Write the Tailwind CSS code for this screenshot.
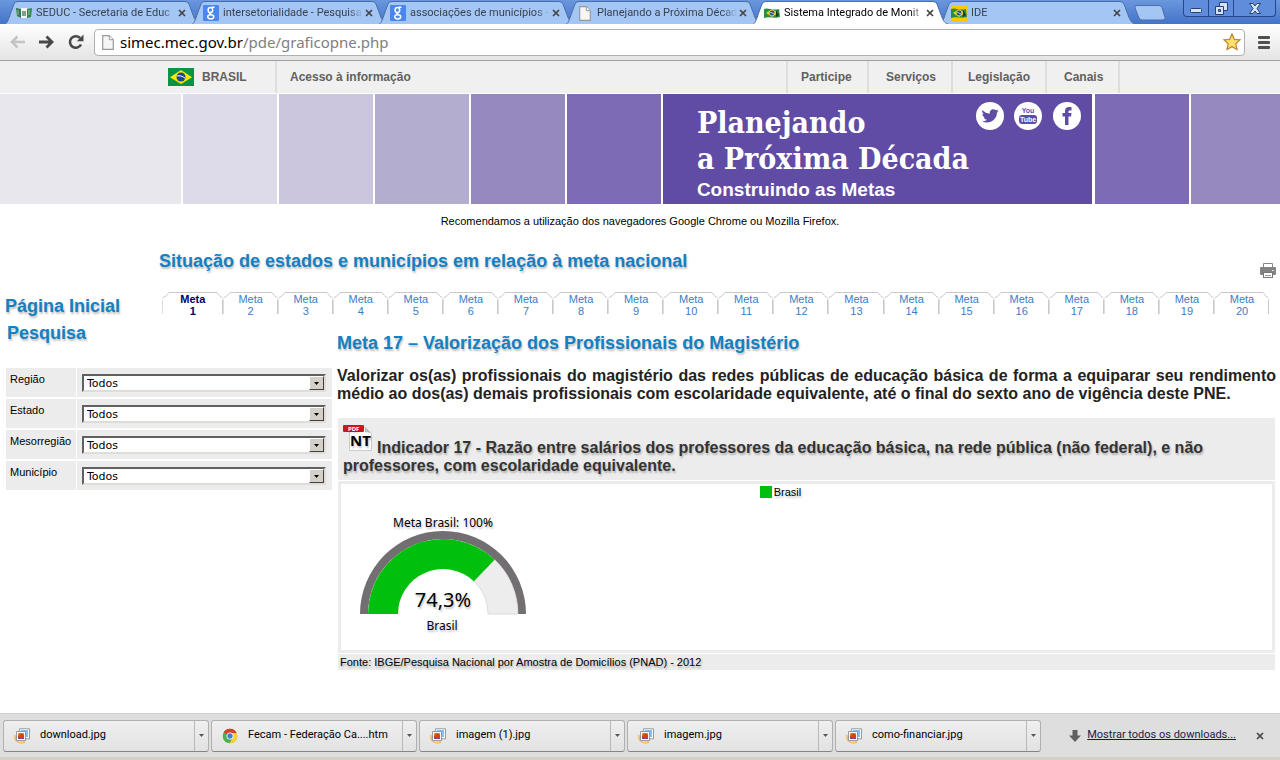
<!DOCTYPE html>
<html lang="pt-BR">
<head>
<meta charset="utf-8">
<meta name="viewport" content="width=device-width, initial-scale=1">
<title>Sistema Integrado de Monitoramento</title>
<script src="https://cdn.jsdelivr.net/npm/@tailwindcss/browser@4"></script>
</head>
<body class="min-h-screen flex flex-col bg-white text-black font-['Liberation_Sans',Arial,sans-serif] text-[11px] overflow-x-hidden">

<svg class="hidden">
  <symbol id="close" viewBox="0 0 8 8"><path d="M1 1l6 6M7 1L1 7" stroke="#444" stroke-width="1.7" fill="none"/></symbol>
  <symbol id="page" viewBox="0 0 12 15"><path d="M.7.7h6.6l4 4v9.6H.7z" fill="#f6f6f6" stroke="#999" stroke-width="1.2"/><path d="M7.3.7v4h4" fill="#fff" stroke="#999"/></symbol>
  <symbol id="google" viewBox="0 0 16 16"><rect width="16" height="16" rx="1" fill="#4a86ee"/><g fill="none" stroke="#fff" stroke-width="1.5"><ellipse cx="7.400" cy="5" rx="2.300" ry="2.600"/><path d="M8.500 2.300h3M8.300 7.500c-2 .4-2 1.500 0 2.100"/><ellipse cx="7.700" cy="11.800" rx="3" ry="2.100"/></g></symbol>
  <symbol id="seduc" viewBox="0 0 16 12"><path d="M0 1l5 1v9l-4-2z" fill="#2f7a48"/><path d="M5 1h6v10H5z" fill="#f2f5f2"/><path d="M11 2l5-1-1 9-4 1z" fill="#2f8a4a"/><path d="M6 4h4v5H6z" fill="#7f9f8b"/><path d="M2 3v5M13 3v5" stroke="#8cc79d"/></symbol>
  <symbol id="flagwave" viewBox="0 0 16 12"><path d="M0 2c4-2 8 2 15 0l1 8c-5 2-10-1-16 1z" fill="#2c8a45"/><path d="M2 6l6-4 6 4-6 4z" fill="#e3d227"/><circle cx="8" cy="6" r="2.400" fill="#264f8a"/><path d="M6 5l4 2" stroke="#fff" stroke-width=".7"/><path d="M12 3l3 5-3 2z" fill="#163d22"/></symbol>
  <symbol id="photo" viewBox="0 0 16 16"><path d="M1 7c-1 6 4 9 10 7" fill="none" stroke="#f6c166" stroke-width="2"/><path d="M5.500.8h10v10h-10z" fill="#fff" stroke="#999"/><path d="M7 2h7v7H7z" fill="#84bff2"/><path d="M2.500 3.500h9v9h-9z" fill="#fff" stroke="#999"/><path d="M4 5h6v6H4z" fill="#f08a2a"/><path d="M4 11V8l3-3 3 2v4z" fill="#d9430d"/><path d="M4 10h6v1H4z" fill="#7b3c9b"/></symbol>
  <symbol id="chrome" viewBox="0 0 16 16"><circle cx="8" cy="8" r="7.300" fill="#4bae4f"/><path d="M8 8L1.700 4.300A7.300 7.300 0 0 1 14.600 5z" fill="#dc3b2d"/><path d="M8 5h6.700A7.300 7.300 0 0 1 7.600 15.300L10.700 9.500z" fill="#fbcf36"/><circle cx="8" cy="8" r="3.500" fill="#fff"/><circle cx="8" cy="8" r="2.700" fill="#3f7fd6"/></symbol>
</svg>

<!-- Browser tabs -->
<header class="shrink-0">
  <div class="h-6 flex justify-between bg-linear-to-b from-[#6a97dd] to-[#4474c9] font-[Roboto,Tahoma,sans-serif]">
    <nav id="browser-tabs" class="flex pl-[10px] min-w-0" aria-label="Abas"></nav>
    <div class="flex h-[17px] mr-[4px] border border-t-0 border-[#27468c] rounded-b bg-[#5f8ddb] shrink-0">
      <button aria-label="Minimizar" class="w-[25px] flex justify-center items-end pb-[3px] border-r border-[#27468c]"><svg width="12" height="5"><rect x=".5" y=".5" width="11" height="4" rx="1" fill="#d5e2f8" stroke="#27407a"/></svg></button>
      <button aria-label="Restaurar" class="w-[25px] grid place-items-center border-r border-[#27468c]"><svg width="13" height="13" fill="#d5e2f8" stroke="#27407a"><path d="M4.500.5h8v8h-8z"/><path d="M.5 4.500h8v8h-8z"/><path d="M3.500 7.500h2v2h-2z" fill="#5f8ddb"/></svg></button>
      <button aria-label="Fechar" class="w-[41px] grid place-items-center"><svg width="12" height="11"><path d="M.5.5h3.500l2 2.500 2-2.500h3.500L8 5.500l3.500 5H8L6 8l-2 2.500H.5l3.500-5z" fill="#d5e2f8" stroke="#27407a"/></svg></button>
    </div>
  </div>
  <!-- Toolbar -->
  <div class="h-[37px] flex items-center border-b border-[#a0a0a0] bg-linear-to-b from-white to-[#e4e4e4] pl-[10px] pr-[10px]">
    <button aria-label="Voltar" class="w-[29px]"><svg width="15" height="14" fill="none" stroke="#c4c4c4" stroke-width="2.500"><path d="M15 7H2M7.500 1.500L2 7l5.500 5.500"/></svg></button>
    <button aria-label="Avançar" class="w-[29px]"><svg width="15" height="14" fill="none" stroke="#484848" stroke-width="2.800"><path d="M0 7h13M7.500 1.500L13 7l-5.500 5.500"/></svg></button>
    <button aria-label="Recarregar" class="w-[26px]"><svg width="16" height="16" fill="none" stroke="#484848" stroke-width="2.600"><path d="M13 10.500A5.800 5.800 0 1 1 12 4"/><path d="M15.500.5v6.700H8.800z" fill="#484848" stroke="none"/></svg></button>
    <div class="flex-1 h-[27px] flex items-center border border-[#b0b0b0] rounded-sm bg-white px-[7px]">
      <svg width="12" height="15"><use href="#page"/></svg>
      <button class="flex-1 ml-[6px] text-left text-[15px] leading-5 font-['Noto_Sans',Tahoma,sans-serif] text-[#808080]" aria-label="Endereço"><span class="text-black">simec.mec.gov.br</span>/pde/graficopne.php</button>
      <button aria-label="Favorito" class="-mr-1"><svg width="18" height="18"><path d="M9 1l2.300 5.300 5.700.6-4.200 3.900 1.200 5.700L9 13.600l-5 2.900 1.200-5.700L1 6.900l5.700-.6z" fill="#ffe26b" stroke="#c08a35" stroke-width="1.300"/></svg></button>
    </div>
    <button aria-label="Menu" class="ml-[13px]"><svg width="12" height="13" fill="#505050"><rect width="12" height="3" rx="1"/><rect y="5" width="12" height="3" rx="1"/><rect y="10" width="12" height="3" rx="1"/></svg></button>
  </div>
</header>

<!-- Government bar -->
<div class="bg-[#f0f0f0] border-b border-white text-[12px] font-bold text-[#606060]">
  <div class="max-w-[960px] mx-auto h-8 flex items-center">
    <a href="#" class="flex items-center h-full w-[117px] pl-2 gap-2 border-r-2 border-[#dedede]">
      <svg width="26" height="18"><rect width="26" height="18" fill="#079447"/><path d="M2 9.300L13 2l11 7.300L13 16z" fill="#fde900"/><circle cx="13" cy="9" r="4.500" fill="#1f4590"/><path d="M8.800 8c3-.7 6 .2 8.200 2.200" stroke="#fff" fill="none"/></svg>
      BRASIL
    </a>
    <a href="#" class="flex-1 pl-[13px]">Acesso à informação</a>
    <nav class="flex h-full">
      <a href="#" class="flex items-center border-l-2 border-[#dedede] w-[81px] pl-[13px]">Participe</a>
      <a href="#" class="flex items-center border-l-2 border-[#dedede] w-[84px] pl-[17px]">Serviços</a>
      <a href="#" class="flex items-center border-l-2 border-[#dedede] w-[94px] pl-[15px]">Legislação</a>
      <a href="#" class="flex items-center border-x-2 border-[#dedede] w-[75px] pl-[17px]">Canais</a>
    </nav>
  </div>
</div>

<!-- Banner -->
<div class="h-[110px] flex gap-[2px]">
  <div class="grow-[2.03] basis-0 bg-[#e8e7ee]"></div>
  <div class="w-[94px] bg-[#dddae9]"></div>
  <div class="w-[94px] bg-[#cbc6de]"></div>
  <div class="w-[94px] bg-[#b3aecf]"></div>
  <div class="w-[94px] bg-[#9689c0]"></div>
  <div class="w-[94px] bg-[#7d6bb5]"></div>
  <div class="w-[429px] bg-[#604ca5] flex justify-between pl-[34px] pr-[11px] text-white">
    <h1 class="pt-[11px] font-bold">
      <span class="block font-['DejaVu_Serif_Condensed','DejaVu_Serif',serif] text-[30px] leading-9 whitespace-nowrap">Planejando<br>a Próxima Década</span>
      <span class="block text-[19px] leading-[26px]">Construindo as Metas</span>
    </h1>
    <div class="flex gap-[10px] pt-2 shrink-0">
      <a href="#" aria-label="Twitter"><svg width="28" height="28"><circle cx="14" cy="14" r="14" fill="#fff"/><path d="M6.500 8c2 2.300 4.500 3.500 7.300 3.700-.6-4 3.700-5.600 6-3.400.9-.2 1.600-.5 2.300-.9-.2.900-.7 1.500-1.400 2 .7-.1 1.300-.3 1.900-.5-.4.700-1 1.300-1.700 1.800.3 6.500-7.300 12.300-15 8.500 2 .1 3.700-.4 5.100-1.500-1.600-.1-2.700-1-3.200-2.400h1.300c-1.700-.5-2.700-1.800-2.800-3.400l1.500.4C6.300 11.200 6 9.500 6.500 8z" fill="#604ca5"/></svg></a>
      <a href="#" aria-label="YouTube"><svg width="28" height="28" font-family="Liberation Sans Narrow, Liberation Sans" font-weight="bold" font-size="7" text-anchor="middle"><circle cx="14" cy="14" r="14" fill="#fff"/><text x="14" y="11" fill="#604ca5">You</text><rect x="5" y="13" width="18" height="9" rx="3" fill="#604ca5"/><text x="14" y="20" fill="#fff" font-size="7">Tube</text></svg></a>
      <a href="#" aria-label="Facebook" class="ml-px"><svg width="28" height="28"><circle cx="14" cy="14" r="14" fill="#fff"/><path d="M12 23v-8.500H9.500V11H12V9c0-2.800 1.600-4 4-4h2.500v3.500h-1.700c-.9 0-1.300.4-1.300 1.200V11h3l-.4 3.500h-2.600V23z" fill="#604ca5"/></svg></a>
    </div>
  </div>
  <div class="w-[95px] border-l border-white bg-[#7d6bb5]"></div>
  <div class="grow basis-0 bg-[#9689c0]"></div>
</div>

<p class="text-center leading-4 mt-[9px]">Recomendamos a utilização dos navegadores Google Chrome ou Mozilla Firefox.</p>

<div class="flex justify-between pl-[159px] pr-1 mt-5">
  <h2 class="text-[18px] leading-6 font-bold text-[#1380c3] text-shadow-[1px_2px_2px_#00000040]">Situação de estados e municípios em relação à meta nacional</h2>
  <button aria-label="Imprimir" class="mt-[13px]"><svg width="16" height="17"><path d="M3.500 6V1.500h9V6" fill="#fff" stroke="#888"/><rect y="5" width="16" height="8" rx="1" fill="#848484"/><rect x="3.500" y="10.500" width="9" height="5" fill="#fff" stroke="#777"/><path d="M5 13.500h6" stroke="#999"/><path d="M12 8.500h2" stroke="#ddd"/></svg></button>
</div>

<div class="flex mt-[11px] pr-[11px]">
  <h2 class="w-[162px] pl-[5px] text-[18px] leading-6 font-bold shrink-0 mt-1"><a href="#" class="text-[#1380c3] text-shadow-[1px_2px_2px_#00000040] whitespace-nowrap">Página Inicial</a></h2>
  <nav id="metas" class="flex flex-1 h-6 mt-[2px]" aria-label="Metas"></nav>
</div>

<div class="flex pr-1 mb-4">
  <aside class="w-[333px] shrink-0 pl-[6px] pr-px mt-[3px]">
    <h2 class="pl-px text-[18px] leading-6 font-bold text-[#1380c3] text-shadow-[1px_2px_2px_#00000040]">Pesquisa</h2>
    <form id="filters" class="mt-[23px] flex flex-col gap-[2px]"></form>
  </aside>
  <main class="flex-1 min-w-0 pl-1 mt-[13px]">
    <h2 class="text-[18px] leading-6 font-bold text-[#1380c3] text-shadow-[1px_2px_2px_#00000040]">Meta 17 – Valorização dos Profissionais do Magistério</h2>
    <p class="mt-3 text-[16px] leading-[18px] font-bold text-[#222] text-justify">Valorizar os(as) profissionais do magistério das redes públicas de educação básica de forma a equiparar seu rendimento médio ao dos(as) demais profissionais com escolaridade equivalente, até o final do sexto ano de vigência deste PNE.</p>
    <section class="mt-[15px] ml-px mr-px flex flex-col gap-px">
      <h3 class="bg-[#ececec] pl-[5px] pr-10 pt-[5px] pb-[5px] text-[16px] leading-[18px] font-bold text-[#333] text-shadow-[1px_2px_2px_#00000040]">
        <a href="#" class="inline-block align-baseline mr-1" aria-label="Nota técnica em PDF"><svg width="30" height="30" font-family="Noto Sans, sans-serif" font-weight="bold"><path d="M6.500 4.500h16l6 6v17h-22z" fill="#fff" stroke="#ccc"/><path d="M22 4l6 6-6-1z" fill="#bbb"/><rect x="0" y="2" width="21" height="7" rx="1" fill="#d0161b"/><text x="5" y="8" font-size="6" fill="#fff">PDF</text><text x="7" y="23" font-size="15" fill="#000">NT</text></svg></a>Indicador 17 - Razão entre salários dos professores da educação básica, na rede pública (não federal), e não professores, com escolaridade equivalente.
      </h3>
      <div class="border-[3px] border-[#ececec] text-shadow-[1px_2px_2px_#00000040]">
        <div class="flex items-center justify-center gap-[2px] leading-4 -ml-[52px]"><span class="size-3 bg-[#00c00d]"></span>Brasil</div>
        <svg class="ml-[12px] mb-2" width="180" height="142" role="img" aria-label="Brasil 74,3%" font-family="Noto Sans, sans-serif" text-anchor="middle">
          <path d="M7 114a83 83 0 0 1 166 0h-8a75 75 0 0 0-150 0z" fill="#726e71"/>
          <path d="M15 114a75 75 0 0 1 126.800-54.200l-20.700 21.700A45 45 0 0 0 45 114z" fill="#00c00d"/>
          <path d="M141.800 59.800A75 75 0 0 1 165 114h-30a45 45 0 0 0-13.900-32.500z" fill="#ededed" stroke="#ccc" stroke-width=".6"/>
          <text x="90" y="27" font-size="12">Meta Brasil: 100%</text>
          <text x="90" y="107" font-size="20">74,3%</text>
          <text x="89" y="130" font-size="12">Brasil</text>
        </svg>
      </div>
      <p class="bg-[#ececec] pl-[2px] leading-4 text-shadow-[1px_2px_2px_#00000040]">Fonte: IBGE/Pesquisa Nacional por Amostra de Domicílios (PNAD) - 2012</p>
    </section>
  </main>
</div>

<!-- Downloads shelf -->
<footer class="mt-auto shrink-0 bg-[#dedede] border-t border-[#d0d0d0] border-b-[3px] border-b-[#d4d0c8] font-[Roboto,Tahoma,sans-serif]">
  <div class="h-[43px] flex items-center justify-between pl-[3px] pr-4">
    <div id="downloads" class="flex gap-[2px]"></div>
    <div class="flex items-center">
      <svg width="12" height="12"><path d="M3.500 0h5v5.500H12L6 12 0 5.500h3.500z" fill="#606060"/></svg>
      <a href="#" class="ml-[6px] underline text-[#1a1a4a]">Mostrar todos os downloads...</a>
      <button aria-label="Fechar barra" class="ml-5"><svg width="8" height="8"><use href="#close"/></svg></button>
    </div>
  </div>
</footer>

<script>
const tabs = [
  ['seduc', 16, 12, 'SEDUC - Secretaria de Educ'],
  ['google', 16, 16, 'intersetorialidade - Pesquisa'],
  ['google', 16, 16, 'associações de municípios -'],
  ['page', 12, 15, 'Planejando a Próxima Décad'],
  ['flagwave', 16, 12, 'Sistema Integrado de Monit', true],
  ['flagwave', 16, 12, 'IDE']
];
document.getElementById('browser-tabs').innerHTML = tabs.map(([icon, w, h, label, active]) => `
  <div class="relative w-[187px] min-w-0 flex items-center pt-[2px] pl-[6px] pr-[11px] ${active ? 'z-10 text-black' : 'text-[#39414f]'}">
    <svg class="absolute -left-[6px] top-px w-[200px] h-[23px]" viewBox="0 0 200 23"><path d="M.5 23.500C4 22 4 19 10 3Q11 .5 14 .5H181q3 0 4 2.500C191 19 191 22 197.500 23.500" fill="${active ? '#fff' : '#a4c6f4'}" stroke="#4b6da6"/></svg>
    <span class="relative w-4 h-4 grid place-items-center ${label === 'IDE' ? 'bg-[#ffc800]' : ''}"><svg width="${w}" height="${h}"><use href="#${icon}"/></svg></span>
    <button class="relative flex-1 min-w-0 ml-1 mr-[2px] text-left overflow-hidden whitespace-nowrap leading-4 mask-r-from-90%">${label}</button>
    <button class="relative" aria-label="Fechar aba"><svg width="8" height="8"><use href="#close"/></svg></button>
  </div>`).join('') + `
  <button class="mt-[5px] self-start" aria-label="Nova aba"><svg width="32" height="16" class="ml-[2px]"><path d="M3 .5h22q2 0 3 2l3 10q.5 2.500-2 2.500H8q-2 0-3-2L1 3Q0 .5 3 .5z" fill="#a4c6f4" stroke="#4b6da6"/></svg></button>`;

document.getElementById('metas').innerHTML = Array.from({length: 20}, (_, i) => `
  <a href="#" class="flex flex-1 ${i ? 'text-[#3c7cc4]' : 'grow-[1.1] font-bold text-[#000066]'}">
    <svg width="7" height="22" fill="none" stroke="#c9c9c9"><path d="M.5 22V7.500" stroke="#dedede"/><path d="M.5 6Q5 4 7 .5"/></svg>
    <span class="flex-1 h-6 border-t border-[#c9c9c9] text-center leading-3">Meta<br>${i + 1}</span>
    <svg width="6" height="22" fill="none" stroke="#c9c9c9"><path d="M0 .5Q2 4 5.500 6"/><path d="M5.500 7.500V22"/></svg>
  </a>`).join('');

document.getElementById('filters').innerHTML = ['Região', 'Estado', 'Mesorregião', 'Município'].map((name, i) => `
  <div class="flex gap-px h-[29px]">
    <label for="f${i}" class="w-[70px] bg-[#ececec] pl-1 pt-[3px] leading-4">${name}</label>
    <div class="flex-1 bg-[#ececec] pt-[6px] pl-[5px] pr-[6px]">
      <div class="relative">
        <select id="f${i}" class="appearance-none block w-full h-[18px] bg-white border-2 border-t-[#606060] border-l-[#606060] border-b-[#e0ddd8] border-r-[#e0ddd8] pl-[3px] pt-px leading-3 rounded-none font-['DejaVu_Sans',Verdana,sans-serif]"><option>Todos</option></select>
        <span class="absolute right-[2px] top-[2px] w-[15px] h-[14px] bg-[#d4d0c8] border border-t-white border-l-white border-b-[#404040] border-r-[#404040] grid place-items-center pointer-events-none"><svg width="5" height="3"><path d="M0 0h5L2.500 3z"/></svg></span>
      </div>
    </div>
  </div>`).join('');

document.getElementById('downloads').innerHTML = [
  ['photo', 'download.jpg'], ['chrome', 'Fecam - Federação Ca....htm'], ['photo', 'imagem (1).jpg'], ['photo', 'imagem.jpg'], ['photo', 'como-financiar.jpg']
].map(([icon, name]) => `
  <div class="w-[206px] h-8 flex border border-[#b0b0b0] border-b-[#858585] rounded-[3px] bg-linear-to-b from-[#efefef] to-[#e2e2e2]">
    <button class="flex-1 flex items-center pl-[10px] gap-[10px] text-black"><svg width="16" height="16"><use href="#${icon}"/></svg>${name}</button>
    <button class="w-[14px] grid place-items-center border-l border-[#b8b8b8]" aria-label="Opções"><svg width="5" height="3"><path d="M0 0h5L2.500 3z" fill="#555"/></svg></button>
  </div>`).join('');
</script>
</body>
</html>
